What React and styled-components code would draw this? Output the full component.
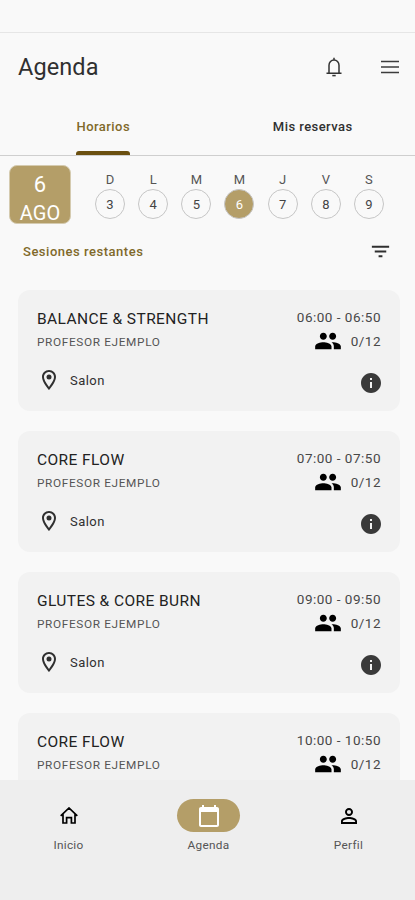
import React, { useState } from 'react'
import styled, { createGlobalStyle, css } from 'styled-components'
import {
  MdFilterList,
  MdOutlineLocationOn,
  MdPeople,
  MdInfo,
  MdCalendarToday,
  MdPersonOutline
} from 'react-icons/md'

const days = [
  { letter: 'D', number: 3 },
  { letter: 'L', number: 4 },
  { letter: 'M', number: 5 },
  { letter: 'M', number: 6 },
  { letter: 'J', number: 7 },
  { letter: 'V', number: 8 },
  { letter: 'S', number: 9 }
]

const sessions = [
  { name: 'BALANCE & STRENGTH', time: '06:00 - 06:50' },
  { name: 'CORE FLOW', time: '07:00 - 07:50' },
  { name: 'GLUTES & CORE BURN', time: '09:00 - 09:50' },
  { name: 'CORE FLOW', time: '10:00 - 10:50' }
]

function BellIcon() {
  return (
    <Bell viewBox='0 0 16 20'>
      <path d='M3 16V8.2a5 5.2 0 0 1 10 0V16M.5 16.2h15M8 3V.8' />
      <path d='M6.3 18.6h3.4' />
    </Bell>
  )
}

function HomeIcon() {
  return (
    <Home viewBox='0 0 18 17'>
      <path d='M.7 8.8 9 1l8.3 7.8M3 7.3V16h3.6v-5.4h4.8V16H15V7.3' />
    </Home>
  )
}

const navItems = [
  { label: 'Inicio', icon: <HomeIcon /> },
  { label: 'Agenda', icon: <MdCalendarToday size={24} />, active: true },
  { label: 'Perfil', icon: <MdPersonOutline size={24} /> }
]

function Session({ name, time }) {
  return (
    <Card>
      <div>
        <Name>{name}</Name>
        <Teacher>PROFESOR EJEMPLO</Teacher>
        <Room>
          <MdOutlineLocationOn size={24} />
          <span>Salon</span>
        </Room>
      </div>
      <Details>
        <Time>{time}</Time>
        <Capacity>
          <MdPeople size={28} />
          <span>0/12</span>
        </Capacity>
        <InfoIcon size={24} />
      </Details>
    </Card>
  )
}

export default function App() {
  const [tab, setTab] = useState('Horarios')
  const [selected, setSelected] = useState(6)

  return (
    <Screen>
      <GlobalStyle />
      <StatusBar />
      <Header>
        <Title>Agenda</Title>
        <BellIcon />
        <MenuIcon viewBox='0 0 18 14'>
          <path d='M0 1.5h18M0 7h18M0 12.5h18' />
        </MenuIcon>
      </Header>
      <Tabs>
        {['Horarios', 'Mis reservas'].map(item => (
          <Tab key={item} active={tab === item} onClick={() => setTab(item)}>
            <span>{item}</span>
          </Tab>
        ))}
      </Tabs>
      <Calendar>
        <DateBox>
          <span>{selected}</span>
          <span>AGO</span>
        </DateBox>
        <Week>
          {days.map(({ letter, number }) => (
            <Day key={number} onClick={() => setSelected(number)}>
              <span>{letter}</span>
              <DayNumber selected={selected === number}>{number}</DayNumber>
            </Day>
          ))}
        </Week>
      </Calendar>
      <Remaining>
        <span>Sesiones restantes</span>
        <MdFilterList size={23} />
      </Remaining>
      <List>
        {sessions.map(session => (
          <Session key={session.time} {...session} />
        ))}
      </List>
      <Nav>
        {navItems.map(({ label, icon, active }) => (
          <NavItem key={label}>
            <Pill active={active}>{icon}</Pill>
            <span>{label}</span>
          </NavItem>
        ))}
      </Nav>
    </Screen>
  )
}

const GlobalStyle = createGlobalStyle`
  :root {
    --gold: #b49e68;
    --goldDark: #6b5010;
    --text: #303030;
  }

  * {
    box-sizing: border-box;
  }

  body {
    margin: 0;
    font-family: Roboto, sans-serif;
    color: var(--text);
    background-color: #f9f9f9;
  }

  svg {
    display: block;
    flex-shrink: 0;
  }
`

const Screen = styled.div`
  display: flex;
  flex-direction: column;
  width: 415px;
  height: 900px;
  overflow: hidden;
  background-color: #f9f9f9;
`

const StatusBar = styled.div`
  flex: 0 0 33px;
  border-bottom: 1px solid #e6e6e6;
`

const Header = styled.header`
  display: flex;
  flex: 0 0 67px;
  align-items: center;
  padding: 0 16px 0 18px;
`

const Title = styled.h1`
  flex: 1;
  margin: 0;
  font-size: 23.5px;
  font-weight: 400;
  letter-spacing: 0.1px;
  line-height: 28px;
`

const Bell = styled.svg`
  width: 16px;
  height: 20px;
  fill: none;
  stroke: #333;
  stroke-width: 1.5;
`

const MenuIcon = styled.svg`
  width: 18px;
  height: 14px;
  margin-left: 39px;
  stroke: #3c3c3c;
  stroke-width: 1.5;
`

const Tabs = styled.div`
  display: flex;
  flex: 0 0 55px;
  border-bottom: 1px solid #cfcfcf;
`

const Tab = styled.div`
  display: flex;
  flex: 1;
  justify-content: center;
  padding-left: 5px;
  font-size: 13px;
  font-weight: 500;
  letter-spacing: 0.45px;
  cursor: pointer;

  span {
    display: flex;
    flex-direction: column;
    justify-content: space-between;
    padding-top: 19px;
    height: 55px;
    line-height: 16px;
  }

  ${({ active }) =>
    active &&
    css`
      padding-left: 1px;
      color: #80692a;

      span::after {
        content: '';
        height: 4px;
        border-radius: 3px 3px 0 0;
        background-color: var(--goldDark);
      }
    `}
`

const Calendar = styled.div`
  display: flex;
  flex: 0 0 74px;
  padding: 9px 31px 0 9px;
`

const DateBox = styled.div`
  display: flex;
  flex-direction: column;
  align-items: center;
  width: 62px;
  height: 59px;
  padding-top: 6px;
  border: 1px solid #d5cbb0;
  border-radius: 8px;
  background-color: var(--gold);
  color: white;
  font-size: 22px;
  line-height: 26px;

  span + span {
    padding-top: 3px;
    font-size: 20px;
    line-height: 24px;
  }
`

const Week = styled.div`
  display: flex;
  flex: 1;
  justify-content: space-between;
  margin-left: 24px;
`

const Day = styled.div`
  display: flex;
  flex-direction: column;
  align-items: center;
  padding-top: 6px;
  font-size: 13px;
  line-height: 17px;
  color: #555;
  cursor: pointer;
`

const DayNumber = styled.div`
  width: 30px;
  height: 30px;
  margin-top: 1px;
  border: 1px solid #c6c6c6;
  border-radius: 50%;
  line-height: 29px;
  text-align: center;
  color: #444;

  ${({ selected }) =>
    selected &&
    css`
      background-color: var(--gold);
      color: white;
    `}
`

const Remaining = styled.div`
  display: flex;
  flex: 0 0 42px;
  align-items: center;
  justify-content: space-between;
  padding: 0 23px;
  font-size: 13px;
  font-weight: 500;
  letter-spacing: 0.52px;
  color: #80692a;

  svg {
    color: var(--text);
  }
`

const List = styled.div`
  display: flex;
  flex: 1;
  flex-direction: column;
  gap: 20px;
  min-height: 0;
  padding: 18px 15px 0 18px;
  overflow: hidden;
`

const Card = styled.div`
  display: flex;
  flex: 0 0 121px;
  justify-content: space-between;
  padding: 18px 19px 0 19px;
  border-radius: 12px;
  background-color: #f2f2f2;
`

const Name = styled.div`
  font-size: 15.5px;
  line-height: 23px;
  letter-spacing: 0.42px;
  color: #222;
`

const Teacher = styled.div`
  margin-top: 3px;
  font-size: 11.8px;
  line-height: 16px;
  letter-spacing: 0.65px;
  color: #555;
`

const Room = styled.div`
  display: flex;
  gap: 9px;
  align-items: center;
  margin-top: 18px;
  font-size: 13px;
  letter-spacing: 0.45px;
`

const Details = styled.div`
  display: flex;
  flex-direction: column;
  align-items: flex-end;
  font-size: 13.5px;
  letter-spacing: 0.5px;
  color: #484848;
`

const Time = styled.div`
  line-height: 18px;
`

const Capacity = styled.div`
  display: flex;
  gap: 9px;
  align-items: center;
  height: 30px;

  svg {
    color: black;
  }
`

const InfoIcon = styled(MdInfo)`
  margin: 15px -2px 0 0;
  color: #3a3a3a;
`

const Nav = styled.nav`
  display: flex;
  flex: 0 0 120px;
  justify-content: space-between;
  padding: 0 35px 0 37px;
  background-color: #eee;
`

const NavItem = styled.div`
  display: flex;
  flex-direction: column;
  align-items: center;
  padding-top: 19px;
  font-size: 11.8px;
  line-height: 16px;
  letter-spacing: 0.3px;
  color: #555;
  cursor: pointer;
`

const Pill = styled.div`
  display: flex;
  align-items: center;
  justify-content: center;
  width: 63px;
  height: 33px;
  margin-bottom: 5px;
  border-radius: 17px;
  color: black;

  ${({ active }) =>
    active &&
    css`
      background-color: var(--gold);
      color: white;
    `}
`

const Home = styled.svg`
  width: 18px;
  height: 17px;
  fill: none;
  stroke: black;
  stroke-width: 1.7;
`
